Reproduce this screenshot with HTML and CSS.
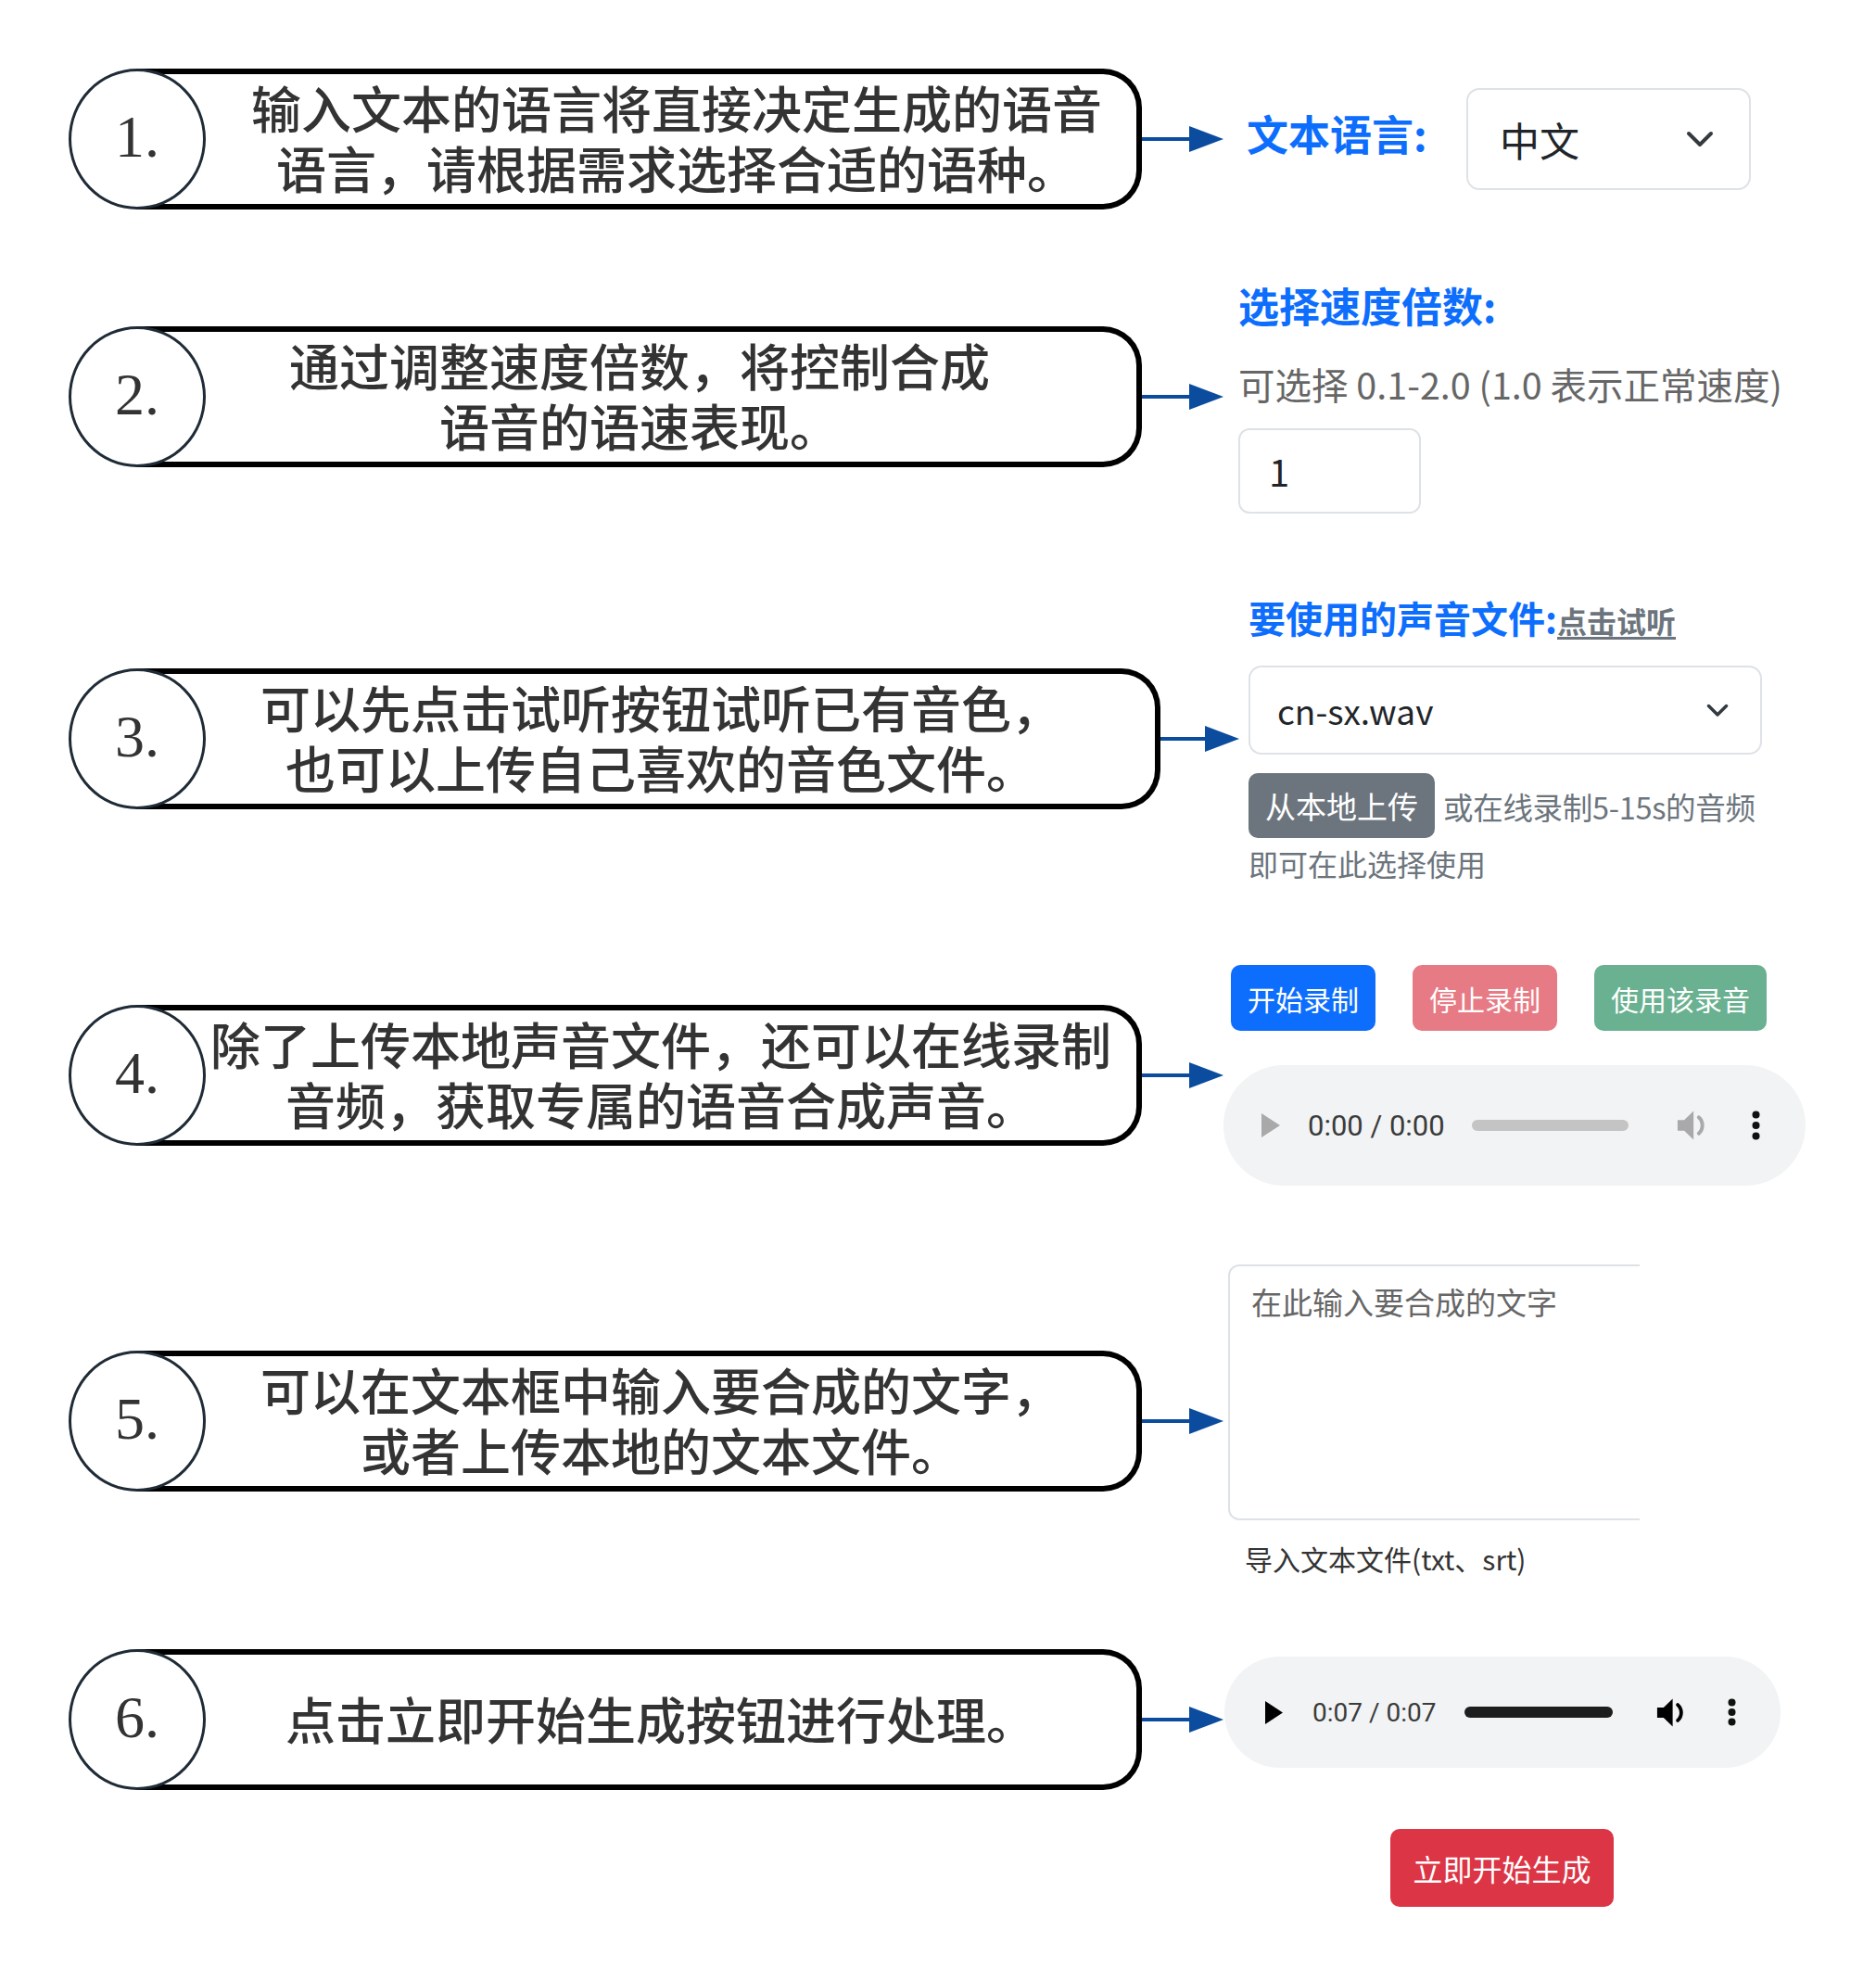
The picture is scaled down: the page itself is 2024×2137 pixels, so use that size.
FILE: index.html
```html
<!DOCTYPE html>
<html lang="zh-CN">
<head>
<meta charset="utf-8">
<title>语音合成使用说明</title>
<link rel="stylesheet" href="styles.css">
</head>
<body>
<main class="page">

  <section class="row r1">
    <div class="cyl">
      <div class="cyl-cap"><span class="cyl-num">1.</span></div>
      <div class="cyl-body cb1"><p class="cyl-text">输入文本的语言将直接决定生成的语音<br>语言，请根据需求选择合适的语种。</p></div>
    </div>
    <div class="arrow"><span class="arrow-shaft"></span><span class="arrow-head"></span></div>
    <div class="panel p1">
      <span class="lbl lbl-lang">文本语言:</span>
      <div class="select sel-lang">
        <span>中文</span>
        <svg class="chev" width="30" height="18" viewBox="0 0 30 18"><polyline points="3,3 15,15 27,3" fill="none" stroke="#343a40" stroke-width="4" stroke-linecap="round" stroke-linejoin="round"/></svg>
      </div>
    </div>
  </section>

  <section class="row r2">
    <div class="cyl">
      <div class="cyl-cap"><span class="cyl-num">2.</span></div>
      <div class="cyl-body cb2"><p class="cyl-text">通过调整速度倍数，将控制合成<br>语音的语速表现。</p></div>
    </div>
    <div class="arrow"><span class="arrow-shaft"></span><span class="arrow-head"></span></div>
    <div class="panel p2">
      <div class="lbl lbl-speed">选择速度倍数:</div>
      <div class="hint-speed">可选择 0.1-2.0 (1.0 表示正常速度)</div>
      <input class="speed" type="text" value="1">
    </div>
  </section>

  <section class="row r3">
    <div class="cyl cyl-wide">
      <div class="cyl-cap"><span class="cyl-num">3.</span></div>
      <div class="cyl-body cb3"><p class="cyl-text">可以先点击试听按钮试听已有音色，<br>也可以上传自己喜欢的音色文件。</p></div>
    </div>
    <div class="arrow arrow-short"><span class="arrow-shaft"></span><span class="arrow-head"></span></div>
    <div class="panel p3">
      <div class="lbl lbl-voice">要使用的声音文件:<a class="listen" href="#">点击试听</a></div>
      <div class="select sel-voice">
        <span>cn-sx.wav</span>
        <svg class="chev" width="24" height="15" viewBox="0 0 24 15"><polyline points="2.5,2.5 12,12 21.5,2.5" fill="none" stroke="#343a40" stroke-width="3.5" stroke-linecap="round" stroke-linejoin="round"/></svg>
      </div>
      <div class="upload-line">
        <button class="btn btn-gray" type="button">从本地上传</button>
        <span class="help help-1">或在线录制5-15s的音频</span>
      </div>
      <div class="help help-2">即可在此选择使用</div>
    </div>
  </section>

  <section class="row r4">
    <div class="cyl">
      <div class="cyl-cap"><span class="cyl-num">4.</span></div>
      <div class="cyl-body"><p class="cyl-text">除了上传本地声音文件，还可以在线录制<br>音频，获取专属的语音合成声音。</p></div>
    </div>
    <div class="arrow"><span class="arrow-shaft"></span><span class="arrow-head"></span></div>
    <div class="panel p4">
      <div class="rec-btns">
        <button class="btn btn-blue" type="button">开始录制</button>
        <button class="btn btn-red-dis" type="button">停止录制</button>
        <button class="btn btn-green-dis" type="button">使用该录音</button>
      </div>
      <div class="audio a1">
        <svg class="aud-play" width="20" height="26" viewBox="0 0 20 26"><polygon points="0,0 20,13 0,26" fill="#a9a9a9"/></svg>
        <span class="aud-time">0:00 / 0:00</span>
        <span class="aud-bar"></span>
        <svg class="aud-vol" width="34" height="34" viewBox="0 0 18 18"><path d="M0.5 6h3.8L9.6 0.8v16.4L4.3 12H0.5z" fill="#a9a9a9"/><path d="M12.6 4.4a6.2 6.2 0 0 1 0 9.2" fill="none" stroke="#a9a9a9" stroke-width="2.1" stroke-linecap="round"/></svg>
        <svg class="aud-more" width="9" height="32" viewBox="0 0 9 32"><circle cx="4.5" cy="4.5" r="4" fill="#111"/><circle cx="4.5" cy="16" r="4" fill="#111"/><circle cx="4.5" cy="27.5" r="4" fill="#111"/></svg>
      </div>
    </div>
  </section>

  <section class="row r5">
    <div class="cyl">
      <div class="cyl-cap"><span class="cyl-num">5.</span></div>
      <div class="cyl-body"><p class="cyl-text">可以在文本框中输入要合成的文字，<br>或者上传本地的文本文件。</p></div>
    </div>
    <div class="arrow"><span class="arrow-shaft"></span><span class="arrow-head"></span></div>
    <div class="panel p5">
      <div class="ta-clip"><textarea class="ta" placeholder="在此输入要合成的文字"></textarea></div>
      <div class="import">导入文本文件(txt、srt)</div>
    </div>
  </section>

  <section class="row r6">
    <div class="cyl">
      <div class="cyl-cap"><span class="cyl-num">6.</span></div>
      <div class="cyl-body"><p class="cyl-text">点击立即开始生成按钮进行处理。</p></div>
    </div>
    <div class="arrow"><span class="arrow-shaft"></span><span class="arrow-head"></span></div>
    <div class="panel p6">
      <div class="audio a2">
        <svg class="aud-play" width="19" height="25" viewBox="0 0 19 25"><polygon points="0,0 19,12.5 0,25" fill="#000"/></svg>
        <span class="aud-time">0:07 / 0:07</span>
        <span class="aud-bar"></span>
        <svg class="aud-vol" width="33" height="33" viewBox="0 0 18 18"><path d="M0.5 6h3.8L9.6 0.8v16.4L4.3 12H0.5z" fill="#000"/><path d="M12.6 4.4a6.2 6.2 0 0 1 0 9.2" fill="none" stroke="#000" stroke-width="2.1" stroke-linecap="round"/></svg>
        <svg class="aud-more" width="9" height="30" viewBox="0 0 9 30"><circle cx="4.5" cy="4.5" r="4" fill="#111"/><circle cx="4.5" cy="15" r="4" fill="#111"/><circle cx="4.5" cy="25.5" r="4" fill="#111"/></svg>
      </div>
    </div>
  </section>

  <div class="gen-row">
    <button class="btn btn-red" type="button">立即开始生成</button>
  </div>

</main>
</body>
</html>
```

FILE: styles.css
```css
html, body {
  margin: 0;
  padding: 0;
  background: #ffffff;
}

body {
  font-family: "Noto Sans CJK SC", "Noto Sans", sans-serif;
  color: #212529;
}

.page {
  padding: 10px 0 0 74px;
}

.row {
  display: flex;
  align-items: center;
}

.r1 { height: 280px; }
.r2 { height: 276px; }
.r3 { height: 462px; }
.r4 { height: 264px; }
.r5 { height: 482px; }
.r6 { height: 162px; }

/* ---------- cylinder callouts ---------- */
.cyl {
  display: flex;
  flex: none;
  width: 1158px;
  height: 152px;
}

.cyl-wide {
  width: 1178px;
}

.cyl-cap {
  position: relative;
  z-index: 1;
  flex: none;
  width: 148px;
  height: 152px;
  box-sizing: border-box;
  border: 3px solid #1f2b36;
  border-radius: 50%;
  background: #ffffff;
  display: flex;
  align-items: center;
  justify-content: center;
}

.cyl-num {
  font-family: "Liberation Serif", "DejaVu Serif", serif;
  font-size: 64px;
  line-height: 1;
  color: #333333;
  margin-top: -4px;
}

.cyl-body {
  flex: 1;
  margin-left: -74px;
  box-sizing: border-box;
  border: 6px solid #000000;
  border-left: 0;
  border-radius: 0 42px 42px 0;
  background: #ffffff;
  display: flex;
  align-items: center;
  justify-content: center;
  padding: 0 22px 0 74px;
}

.cb1 { padding-left: 108px; }
.cb2 { padding-right: 68px; }
.cb3 { padding-right: 42px; }

.cyl-text {
  margin: 0;
  padding-top: 6px;
  flex: 1;
  text-align: center;
  white-space: nowrap;
  font-family: "Liberation Sans", "Noto Sans CJK SC", sans-serif;
  font-weight: 500;
  font-size: 54px;
  line-height: 65px;
  color: #333333;
}

/* ---------- arrows ---------- */
.arrow {
  flex: none;
  width: 88px;
  display: flex;
  align-items: center;
}

.arrow-short {
  width: 85px;
}

.arrow-shaft {
  flex: 1;
  height: 4px;
  background: #0b4c9e;
}

.arrow-head {
  flex: none;
  width: 0;
  height: 0;
  border-left: 37px solid #0b4c9e;
  border-top: 14px solid transparent;
  border-bottom: 14px solid transparent;
}

/* ---------- panels ---------- */
.panel {
  flex: none;
}

.p1 {
  display: flex;
  align-items: center;
  margin-left: 25px;
}

.p2 { margin-left: 16px; }
.p3 { margin-left: 10px; width: 556px; }
.p4 { margin-left: 0; }
.p5 { margin-left: 5px; }
.p6 { margin-left: 1px; }

.lbl {
  color: #0d6efd;
  font-weight: 700;
}

.lbl-lang {
  width: 237px;
  font-size: 45px;
  line-height: 52px;
  margin-bottom: 12px;
}

.select {
  box-sizing: border-box;
  border: 2px solid #dee2e6;
  border-radius: 14px;
  background: #ffffff;
  display: flex;
  align-items: center;
  justify-content: space-between;
  color: #212529;
}

.sel-lang {
  width: 307px;
  height: 110px;
  padding: 0 38px 0 34px;
  font-size: 43px;
}

.lbl-speed {
  font-size: 44px;
  line-height: 52px;
}

.hint-speed {
  margin-top: 33px;
  font-size: 39.5px;
  line-height: 52px;
  color: #666666;
  white-space: nowrap;
}

.speed {
  display: block;
  margin-top: 22px;
  width: 197px;
  height: 92px;
  box-sizing: border-box;
  border: 2px solid #dee2e6;
  border-radius: 12px;
  padding: 0 0 0 31px;
  font-family: "Noto Sans CJK SC", sans-serif;
  font-size: 40px;
  color: #212529;
  background: #ffffff;
  outline: none;
}

.lbl-voice {
  font-size: 40px;
  line-height: 50px;
  white-space: nowrap;
}

.listen {
  font-size: 32px;
  font-weight: 700;
  color: #6c757d;
  text-decoration: underline;
  text-underline-offset: 4px;
}

.sel-voice {
  margin-top: 24px;
  width: 554px;
  height: 96px;
  padding: 0 34px 0 29px;
  font-size: 37px;
}

.upload-line {
  margin-top: 20px;
  display: flex;
  align-items: center;
  white-space: nowrap;
}

.btn {
  border: 0;
  border-radius: 10px;
  color: #ffffff;
  font-family: "Noto Sans CJK SC", sans-serif;
  cursor: pointer;
  white-space: nowrap;
}

.btn-gray {
  width: 201px;
  height: 70px;
  padding: 0;
  background: #6c757d;
  font-size: 33px;
}

.help {
  color: #6c757d;
}

.help-1 {
  margin-left: 9px;
  font-size: 32.5px;
  letter-spacing: -0.3px;
}

.help-2 {
  margin-top: 5px;
  font-size: 32px;
  line-height: 44px;
}

.rec-btns {
  display: flex;
  gap: 40px;
  margin-left: 8px;
  margin-bottom: 37px;
}

.rec-btns .btn {
  height: 71px;
  padding: 0 18px;
  font-size: 30px;
}

.btn-blue { background: #0d6efd; }
.btn-red-dis { background: #e77b85; }
.btn-green-dis { background: #69b190; }

/* ---------- audio players ---------- */
.audio {
  box-sizing: border-box;
  display: flex;
  align-items: center;
  background: #f1f3f4;
}

.aud-play,
.aud-vol,
.aud-more {
  flex: none;
  display: block;
}

.aud-time {
  flex: none;
  font-family: Roboto, "Liberation Sans", sans-serif;
  color: #3b3b3b;
  white-space: nowrap;
}

.aud-bar {
  flex: none;
  display: block;
  height: 12px;
  border-radius: 6px;
}

.a1 {
  width: 628px;
  height: 130px;
  border-radius: 65px;
  padding-left: 41px;
}

.a1 .aud-time {
  width: 145px;
  margin-left: 30px;
  font-size: 31px;
}

.a1 .aud-bar {
  width: 169px;
  margin-left: 32px;
  background: #c4c4c4;
}

.a1 .aud-vol { margin-left: 52px; }
.a1 .aud-more { margin-left: 47px; }

.a2 {
  width: 600px;
  height: 120px;
  border-radius: 60px;
  padding-left: 44px;
  margin-bottom: 16px;
}

.a2 .aud-time {
  width: 134px;
  margin-left: 32px;
  font-size: 28px;
}

.a2 .aud-bar {
  width: 160px;
  margin-left: 30px;
  background: #1e1e1e;
}

.a2 .aud-vol { margin-left: 47px; }
.a2 .aud-more { margin-left: 44px; }

/* ---------- textarea ---------- */
.ta-clip {
  width: 444px;
  height: 276px;
  overflow: hidden;
}

.ta {
  display: block;
  width: 600px;
  height: 276px;
  box-sizing: border-box;
  border: 2px solid #dee2e6;
  border-radius: 12px;
  padding: 14px 23px;
  font-family: "Noto Sans CJK SC", sans-serif;
  font-size: 33px;
  line-height: 1.5;
  color: #212529;
  resize: none;
  outline: none;
  background: #ffffff;
}

.ta::placeholder {
  color: #666666;
}

.import {
  margin-top: 19px;
  margin-left: 18px;
  font-size: 30px;
  line-height: 44px;
  color: #333333;
  white-space: nowrap;
}

/* ---------- generate button ---------- */
.gen-row {
  margin-top: 37px;
  padding-left: 1426px;
}

.btn-red {
  width: 241px;
  height: 84px;
  padding: 0;
  background: #dc3545;
  font-size: 32px;
}
```
